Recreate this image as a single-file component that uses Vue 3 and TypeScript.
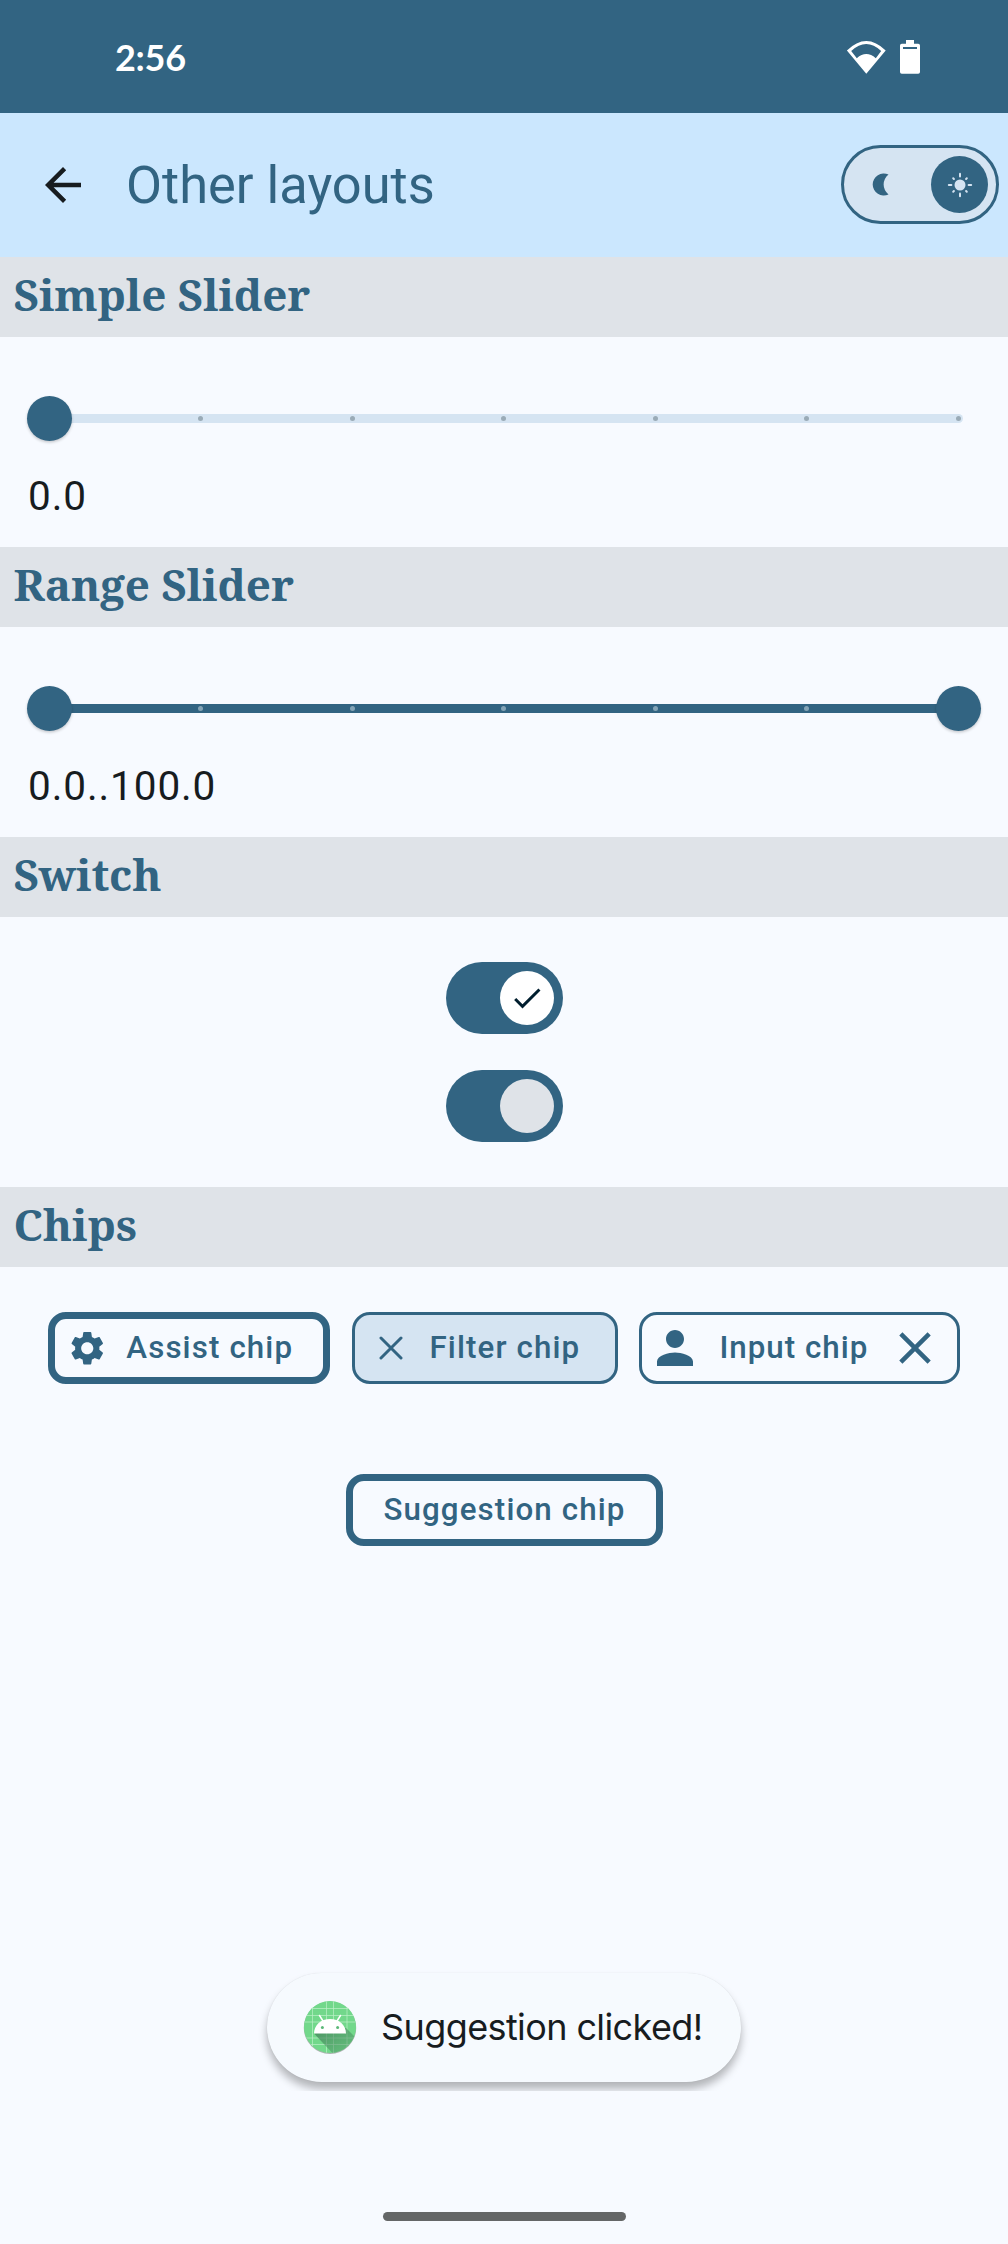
<script setup lang="ts">
interface SliderSection {
  title: string
  value: string
  range: boolean
}

const sliders: SliderSection[] = [
  { title: 'Simple Slider', value: '0.0', range: false },
  { title: 'Range Slider', value: '0.0..100.0', range: true },
]

const ticks: number[] = [0, 1, 2, 3, 4, 5, 6]
const rays: number[] = [0, 45, 90, 135, 180, 225, 270, 315]
</script>

<template>
  <div class="screen">
    <div class="status">
      <span class="clock">2:56</span>
      <div class="status-icons">
        <svg class="wifi" width="40" height="34" viewBox="0 0 40 34">
          <path d="M.9 9.600Q20.300-9.400 39.700 9.600L20.300 32.800ZM5.200 10L10.800 17.200Q20.300 8.800 29.800 17.200L35.200 10Q20.300-4 5.200 10Z" fill="#fff" fill-rule="evenodd" />
        </svg>
        <svg class="battery" width="20" height="34" viewBox="0 0 20 34">
          <path d="M6 0h8v3.7h4.2Q20 3.7 20 5.5V32q0 1.7-1.8 1.7H1.8Q0 33.700 0 32V5.500Q0 3.700 1.800 3.700H6ZM3 7v2h14V7Z" fill="#fff" fill-rule="evenodd" />
        </svg>
      </div>
    </div>

    <header class="appbar">
      <svg class="back" width="54" height="54" viewBox="0 0 24 24">
        <path d="M20 11H7.830l5.590-5.590L12 4l-8 8 8 8 1.410-1.410L7.830 13H20v-2z" fill="#171c1f" />
      </svg>
      <h1>Other layouts</h1>
      <div class="theme">
        <svg width="17" height="23" viewBox="0 0 17 23">
          <path d="M16.500 1.600A11 11 0 1 0 16.500 21.400A12.500 12.500 0 0 1 16.500 1.600Z" fill="#326482" />
        </svg>
        <div class="theme-thumb">
          <svg width="26" height="26" viewBox="-13 -13 26 26">
            <circle r="5.500" fill="#d5e4f2" />
            <path v-for="r in rays" :key="r" :d="r % 90 ? 'M0-8.600V-9.600' : 'M0-8.600V-11.200'" :transform="`rotate(${r})`" stroke="#d5e4f2" stroke-width="2" stroke-linecap="round" />
          </svg>
        </div>
      </div>
    </header>

    <section v-for="s in sliders" :key="s.title">
      <h2>{{ s.title }}</h2>
      <div class="slider-body">
        <div class="slider" :class="{ range: s.range }">
          <div class="track">
            <i v-for="t in ticks" :key="t" class="tick" />
          </div>
          <div class="thumb" />
          <div v-if="s.range" class="thumb end" />
        </div>
        <p class="value">{{ s.value }}</p>
      </div>
    </section>

    <section>
      <h2>Switch</h2>
      <div class="switches">
        <div class="switch">
          <div class="knob white">
            <svg width="36" height="36" viewBox="0 0 24 24">
              <path d="M9 16.170L4.830 12l-1.420 1.410L9 19 21 7l-1.410-1.410z" fill="#001e2e" />
            </svg>
          </div>
        </div>
        <div class="switch"><div class="knob" /></div>
      </div>
    </section>

    <section>
      <h2>Chips</h2>
      <div class="chips">
        <div class="chip thick assist">
          <svg width="40.500" height="40.500" viewBox="0 0 24 24">
            <path d="M19.140 12.940c.04-.3.06-.61.06-.94 0-.32-.02-.64-.07-.94l2.030-1.580c.18-.14.23-.41.12-.61l-1.920-3.320c-.12-.22-.37-.29-.59-.22l-2.390.96c-.5-.38-1.030-.7-1.620-.94l-.36-2.540c-.04-.24-.24-.41-.48-.41h-3.840c-.24 0-.43.17-.47.41l-.36 2.540c-.59.24-1.130.57-1.620.94l-2.390-.96c-.22-.08-.47 0-.59.22L2.740 8.870c-.12.21-.08.47.12.61l2.030 1.580c-.05.3-.09.63-.09.94s.02.64.07.94l-2.030 1.580c-.18.14-.23.41-.12.61l1.920 3.320c.12.22.37.29.59.22l2.390-.96c.5.38 1.030.7 1.620.94l.36 2.540c.05.24.24.41.48.41h3.840c.24 0 .44-.17.47-.41l.36-2.540c.59-.24 1.130-.56 1.620-.94l2.390.96c.22.08.47 0 .59-.22l1.920-3.320c.12-.22.07-.47-.12-.61l-2.010-1.580zM12 15.600c-1.980 0-3.600-1.620-3.600-3.600s1.620-3.600 3.600-3.600 3.600 1.620 3.600 3.600-1.620 3.600-3.600 3.600z" />
          </svg>
          <span>Assist chip</span>
        </div>
        <div class="chip filter">
          <svg width="24" height="24" viewBox="0 0 24 24">
            <path d="M2 2L22 22M22 2L2 22" stroke="#326482" stroke-width="3" stroke-linecap="round" />
          </svg>
          <span>Filter chip</span>
        </div>
        <div class="chip input">
          <svg width="54" height="54" viewBox="0 0 24 24">
            <path d="M12 12c2.210 0 4-1.790 4-4s-1.790-4-4-4-4 1.790-4 4 1.790 4 4 4zm0 2c-2.670 0-8 1.340-8 4v2h16v-2c0-2.660-5.330-4-8-4z" />
          </svg>
          <span>Input chip</span>
          <svg class="clear" width="54" height="54" viewBox="0 0 24 24">
            <path d="M19 6.410L17.590 5 12 10.590 6.410 5 5 6.410 10.590 12 5 17.590 6.410 19 12 13.410 17.590 19 19 17.590 13.410 12z" />
          </svg>
        </div>
      </div>
      <div class="chips second">
        <div class="chip thick suggestion"><span>Suggestion chip</span></div>
      </div>
    </section>

    <div class="toast-clip">
      <div class="toast">
        <svg width="54" height="54" viewBox="0 0 54 54">
          <defs>
            <clipPath id="disc"><circle cx="27" cy="27" r="26" /></clipPath>
            <linearGradient id="cast" x1="0" y1="0" x2="1" y2="1">
              <stop offset="0" stop-color="#3f7a54" stop-opacity=".75" />
              <stop offset="1" stop-color="#4f9a68" stop-opacity=".25" />
            </linearGradient>
          </defs>
          <circle cx="27" cy="27.800" r="26.200" fill="#a9b3ae" />
          <circle cx="27" cy="27" r="26" fill="#72d88b" />
          <g clip-path="url(#disc)">
            <path d="M9.500 0V54M23.500 0V54M30.500 0V54M44 0V54M0 8.500H54M0 15.500H54M0 22H54M0 38H54M0 44.500H54" stroke="#bdf0c8" stroke-width=".7" />
            <path d="M11 33.500L43 28L60 45V60H36Z" fill="url(#cast)" />
          </g>
          <path d="M11 33.500C11 25 18 19 27 19S43 25 43 33.500Z" fill="#fff" />
          <path d="M20 21L16.500 15.500M34 21L37.500 15.500" stroke="#fff" stroke-width="1.500" stroke-linecap="round" />
          <circle cx="19.400" cy="27.500" r="1.500" fill="#5cb878" />
          <circle cx="34.600" cy="27.500" r="1.500" fill="#5cb878" />
        </svg>
        <span>Suggestion clicked!</span>
      </div>
    </div>
    <div class="handle" />
  </div>
</template>

<style>
body {
  margin: 0;
  background: #f7faff;
}
</style>

<style scoped>
.screen {
  display: flex;
  flex-direction: column;
  width: 1008px;
  height: 2244px;
  overflow: hidden;
  background: #f7faff;
  color: #171c1f;
  font-family: Roboto, sans-serif;
}
.status {
  display: flex;
  flex: none;
  justify-content: space-between;
  box-sizing: border-box;
  height: 113px;
  padding: 40px 88px 0 115px;
  background: #326482;
  color: #fff;
}
.clock {
  margin-top: -1px;
  font: 700 36px/36px Lato, sans-serif;
  letter-spacing: -0.3px;
}
.status-icons {
  display: flex;
  gap: 14px;
}
.wifi {
  margin-top: 1px;
}
.appbar {
  display: flex;
  flex: none;
  align-items: center;
  box-sizing: border-box;
  height: 144px;
  padding: 0 9px 0 36px;
  background: #cbe7fe;
}
h1 {
  margin: 0 auto 0 36px;
  color: #326482;
  font-size: 52.4px;
  font-weight: 400;
  line-height: 60px;
}
.theme {
  display: flex;
  align-items: center;
  justify-content: space-between;
  box-sizing: border-box;
  width: 158px;
  height: 79px;
  margin-bottom: 1px;
  padding: 0 8px 0 28px;
  border: 3px solid #326482;
  border-radius: 40px;
  background: #d5e4f2;
}
.theme-thumb {
  display: flex;
  align-items: center;
  justify-content: center;
  width: 57px;
  height: 57px;
  border-radius: 50%;
  background: #326482;
}
section {
  flex: none;
}
h2 {
  height: 80px;
  margin: 0;
  padding-left: 13.5px;
  background: #dfe3e8;
  color: #326482;
  font: 700 44px/75px "Noto Serif", "DejaVu Serif Condensed", "DejaVu Serif", serif;
  letter-spacing: -0.1px;
}
.slider-body {
  box-sizing: border-box;
  height: 210px;
  padding: 59px 27px 0;
}
.slider {
  position: relative;
  height: 45px;
  padding: 18px 18px;
  box-sizing: border-box;
}
.track {
  display: flex;
  align-items: center;
  justify-content: space-between;
  height: 9px;
  box-sizing: border-box;
  padding: 0 2.5px 0 1.5px;
  border-radius: 5px;
  background: #d5e4f2;
}
.range .track {
  background: #326482;
}
.tick {
  width: 5px;
  height: 5px;
  border-radius: 50%;
  background: #9aabb7;
}
.range .tick {
  background: #84a4b6;
}
.thumb {
  position: absolute;
  top: 0;
  left: 0;
  width: 45px;
  height: 45px;
  border-radius: 50%;
  background: #326482;
  box-shadow: 0 1.5px 3px rgba(0, 0, 0, 0.2);
}
.thumb.end {
  right: 0;
  left: auto;
}
.value {
  margin: 28px 0 0 1px;
  font-size: 40.5px;
  line-height: 54px;
  letter-spacing: 0.9px;
}
.switches {
  display: flex;
  flex-direction: column;
  align-items: center;
  gap: 36px;
  box-sizing: border-box;
  height: 270px;
  padding-top: 45px;
}
.switch {
  display: flex;
  align-items: center;
  justify-content: flex-end;
  box-sizing: border-box;
  width: 117px;
  height: 72px;
  padding-right: 9px;
  border-radius: 36px;
  background: #326482;
}
.knob {
  display: flex;
  align-items: center;
  justify-content: center;
  width: 54px;
  height: 54px;
  border-radius: 50%;
  background: #dfe3e8;
}
.knob.white {
  background: #fff;
}
.chips {
  display: flex;
  justify-content: space-between;
  padding: 45px 48px 0;
}
.chips.second {
  justify-content: center;
  padding-top: 90px;
  padding-left: 49px;
}
.chip {
  display: flex;
  align-items: center;
  box-sizing: border-box;
  height: 72px;
  border: 3px solid #326482;
  border-radius: 18px;
  color: #326482;
  font-size: 31.3px;
  font-weight: 500;
  letter-spacing: 1.12px;
  white-space: nowrap;
}
.chip span {
  padding-bottom: 2px;
}
.chip svg {
  flex: none;
  fill: #326482;
}
.thick {
  border-width: 7px;
}
.assist {
  width: 282px;
  padding-left: 11.5px;
}
.assist span {
  margin-left: 19.3px;
}
.filter {
  width: 266px;
  padding-left: 24px;
  background: #d5e4f2;
}
.filter span {
  margin-left: 27px;
}
.input {
  width: 321px;
  padding-left: 6px;
}
.input span {
  margin-left: 17.5px;
  letter-spacing: 1px;
}
.input .clear {
  margin-left: auto;
  margin-right: 15px;
}
.suggestion {
  justify-content: center;
  width: 317px;
}
.toast-clip {
  align-self: center;
  margin-top: auto;
  clip-path: inset(-10px -30px -9px -30px);
}
.toast {
  display: flex;
  align-items: center;
  box-sizing: border-box;
  width: 474px;
  height: 109px;
  padding: 0 0 2px 36px;
  border-radius: 55px;
  background: #f6fafe;
  box-shadow: 0 7px 9px rgba(0, 0, 0, 0.28), 0 0 1px rgba(0, 0, 0, 0.12);
}
.toast span {
  margin-left: 24px;
  font: 400 36px/44px Inter, sans-serif;
  letter-spacing: -0.6px;
  white-space: nowrap;
}
.handle {
  flex: none;
  align-self: center;
  width: 243px;
  height: 9px;
  margin: 130px 0 23px;
  border-radius: 5px;
  background: #646667;
}
</style>
